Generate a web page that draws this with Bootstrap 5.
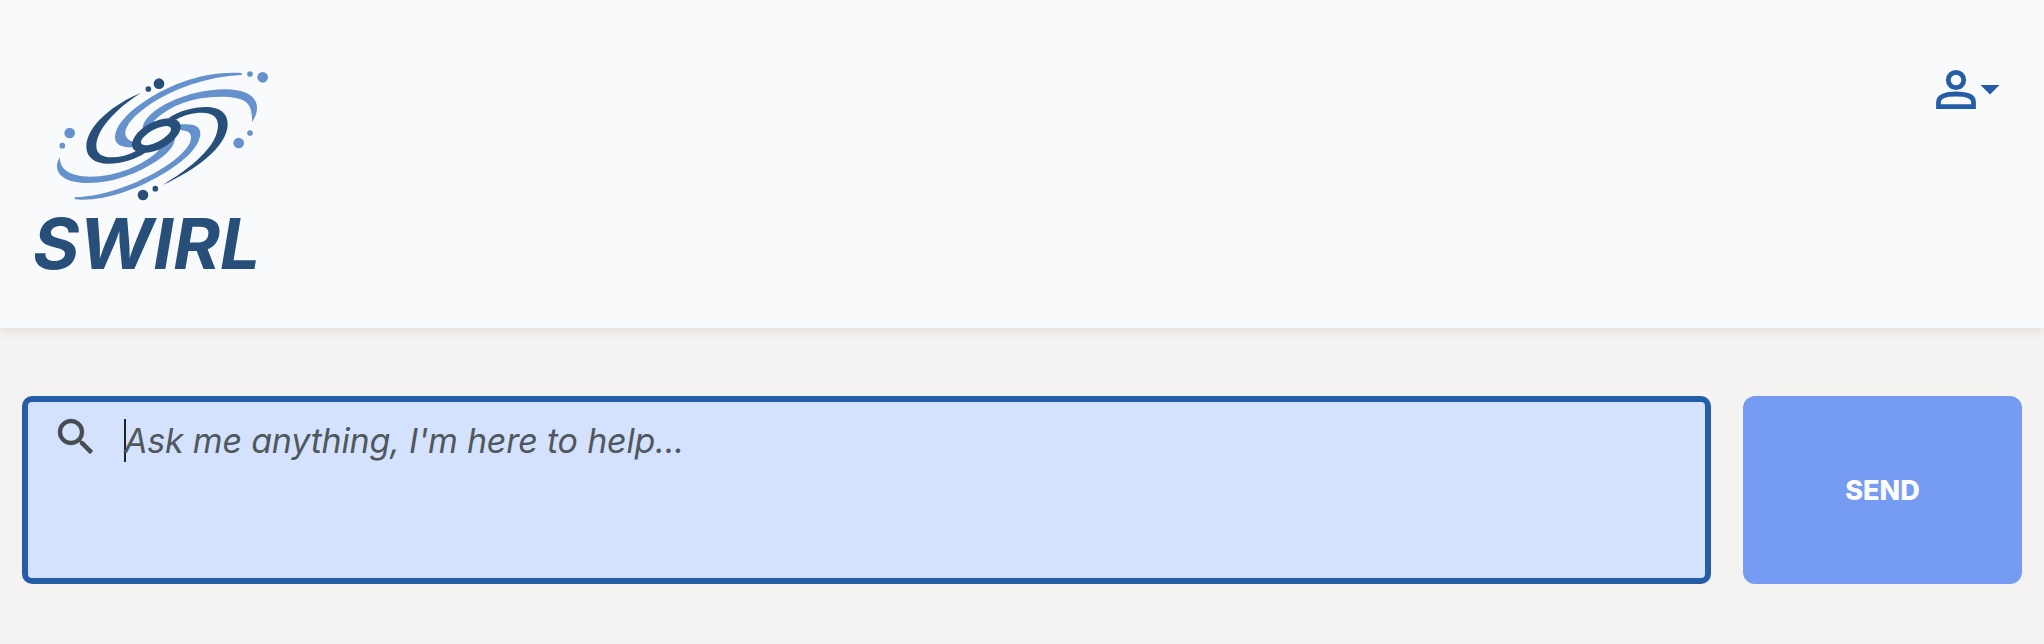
<!DOCTYPE html>
<html lang="en">
<head>
<meta charset="utf-8">
<meta name="viewport" content="width=device-width, initial-scale=1">
<title>SWIRL</title>
<link href="https://cdn.jsdelivr.net/npm/bootstrap@5.3.0/dist/css/bootstrap.min.css" rel="stylesheet">
<style>
body{background:#f4f3f1;font-family:Inter,"Liberation Sans",sans-serif;overflow:hidden}
.site-header{height:328px;background:#f8fafc;box-shadow:0 2px 12px rgba(0,0,0,.1);padding:50px 44px 0 20px}
.logo{width:270px;height:240px;display:block}
.logo text{font:italic 700 212px Inter,sans-serif}
.user-menu{color:#255ea6;gap:0;padding:14px 0 0}
.search-area{padding:68px 22px 0;gap:32px}
.ask-box{height:188px;background:#d5e2fd;border:6px solid #255ea6;border-radius:10px;padding:16px 28px}
.search-icon{margin:-5px 0 0 -4px}
.ask-caret{width:2px;height:43px;background:#212529;margin-left:24px;margin-top:1px}
.ask-hint{font-size:34px;line-height:44px;font-style:italic;color:#50575e;white-space:nowrap;margin-left:-2px;letter-spacing:-.2px;padding-top:1px}
.btn-send,.btn-send:hover{width:279px;height:188px;border:0;border-radius:12px;background:#769bf3;color:#fcfcfc;font-size:27px;font-weight:800;padding-top:8px}
</style>
</head>
<body>
<header class="site-header d-flex justify-content-between align-items-start position-relative">
  <a href="#" aria-label="SWIRL">
    <svg class="logo" viewBox="0 0 810 720">
      <g fill="#6591cc">
        <path d="M665 69C560 62 440 100 345 175C310 203 285 235 285 262C285 285 305 293 340 292L338 275C325 270 316 262 316 248C316 225 345 195 380 170C460 115 560 80 665 75Z"/>
        <path d="M368 232C375 180 500 118 615 118C680 118 711 140 711 175C711 190 704 205 696 216C698 160 680 140 600 140C520 140 450 165 402 212L420 240L366 245Z"/>
        <path d="M120 322C118 355 145 380 210 380C290 380 370 345 415 302L410 270L465 266C462 290 445 305 430 318C370 365 285 399 205 399C145 399 111 380 111 348C111 338 115 330 120 322Z"/>
        <path d="M163 442C260 440 370 395 450 340C490 310 513 285 513 263C513 248 505 243 483 241L475 224C520 219 541 228 541 250C541 290 490 335 440 365C350 420 250 455 165 448Z"/>
        <circle cx="728" cy="82" r="16"/><circle cx="690" cy="72" r="8.500"/>
        <circle cx="149" cy="249" r="16"/><circle cx="127" cy="287" r="8.500"/>
        <circle cx="656" cy="279" r="16"/><circle cx="690" cy="249" r="8.500"/>
      </g>
      <g fill="#284f7a">
        <path d="M363 128C285 160 199 225 199 290C199 322 225 341 265 341C305 341 345 328 376 308L348 303C325 315 300 322 275 322C248 322 229 312 229 288C229 240 285 178 363 128Z"/>
        <path d="M428 405C510 355 594 290 594 225C594 200 575 188 545 188C520 188 490 195 468 209L445 205C475 183 520 171 558 171C600 171 623 190 623 222C623 290 525 361 428 405Z"/>
        <ellipse cx="409" cy="257" rx="80" ry="41" transform="rotate(-28 409 257)"/>
        <circle cx="417" cy="101" r="16"/><circle cx="385" cy="117" r="8.500"/>
        <circle cx="369" cy="435" r="16"/><circle cx="406" cy="416" r="8.500"/>
        <text x="38" y="657" textLength="683" lengthAdjust="spacingAndGlyphs">SWIRL</text>
      </g>
      <ellipse cx="408" cy="257" rx="50" ry="19" transform="rotate(-28 408 257)" fill="#f8fafc"/>
    </svg>
  </a>
  <button class="user-menu btn border-0 d-flex align-items-start" aria-label="Account">
    <svg width="48" height="52" viewBox="0 0 48 52" fill="none" stroke="currentColor" stroke-width="4.800"><circle cx="24" cy="16" r="7.700"/><path d="M6.500 42.600V38C6.500 32.500 14 30 24 30S41.500 32.500 41.500 38V42.600Z"/></svg>
    <svg width="20" height="40" viewBox="0 0 20 40"><path d="M.5 21H19.500L10 30.500Z" fill="currentColor"/></svg>
  </button>
</header>
<main class="search-area d-flex">
  <div class="ask-box flex-grow-1 d-flex align-items-start">
    <svg class="search-icon" width="48" height="48" viewBox="0 0 24 24" fill="#464c51" stroke="#464c51" stroke-width=".2"><path d="M15.500 14h-.79l-.28-.27A6.471 6.471 0 0 0 16 9.500 6.500 6.500 0 1 0 9.500 16c1.610 0 3.090-.59 4.230-1.570l.27.28v.79l5 4.990L20.490 19l-4.990-5zm-6 0C7.010 14 5 11.990 5 9.500S7.010 5 9.500 5 14 7.010 14 9.500 11.990 14 9.500 14z"/></svg>
    <span class="ask-caret"></span>
    <span class="ask-hint">Ask me anything, I'm here to help...</span>
  </div>
  <button class="btn btn-send">SEND</button>
</main>
<script src="https://cdn.jsdelivr.net/npm/bootstrap@5.3.0/dist/js/bootstrap.bundle.min.js"></script>
</body>
</html>
